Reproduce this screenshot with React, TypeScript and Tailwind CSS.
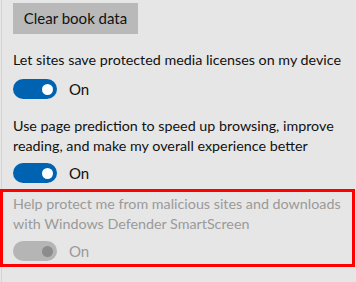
import { useState } from "react";

const font = { fontFamily: 'Lato, "Segoe UI", sans-serif' };

export default function App() {
  const [media, setMedia] = useState(true);
  const [predict, setPredict] = useState(true);

  return (
    <div className="relative h-[282px] w-[356px] overflow-hidden bg-[#e6e6e6]" style={font}>
      <div className="ml-px h-full border-l border-[#d4d4d4] pl-[11px] pt-[3px]">
        <button className="h-[31px] w-[125px] bg-[#b9b9b9] text-[15px] text-[#111]">Clear book data</button>

        <Setting
          label="Let sites save protected media licenses on my device"
          on={media}
          onToggle={() => setMedia(!media)}
          className="mt-[16px]"
          rowGap="mt-[9px]"
        />
        <Setting
          label="Use page prediction to speed up browsing, improve reading, and make my overall experience better"
          on={predict}
          onToggle={() => setPredict(!predict)}
          className="mt-[17px]"
          rowGap="mt-[7px]"
        />
        <Setting
          label="Help protect me from malicious sites and downloads with Windows Defender SmartScreen"
          on
          disabled
          className="mt-[11px]"
          rowGap="mt-[7px]"
        />
      </div>

      {/* annotation box */}
      <div className="pointer-events-none absolute left-0 top-[189px] h-[78px] w-[355px] border-[3px] border-[#ff0000]" />
    </div>
  );
}

function Setting({
  label,
  on,
  onToggle,
  disabled,
  className,
  rowGap,
}: {
  label: string;
  on: boolean;
  onToggle?: () => void;
  disabled?: boolean;
  className?: string;
  rowGap: string;
}) {
  return (
    <div className={className}>
      <p className={`text-[14.3px] leading-[20px] ${disabled ? "text-[#9a9a9a]" : "text-[#111]"}`}>{label}</p>
      <div className={`${rowGap} flex h-5 items-center gap-3`}>
        <button
          onClick={onToggle}
          disabled={disabled}
          className={`flex h-5 w-11 items-center justify-end rounded-full pr-[4px] ${
            disabled ? "bg-[#b5b5b5]" : "bg-[#0063b1]"
          }`}
        >
          <span className={`size-[11px] rounded-full ${disabled ? "bg-[#8c8c8c]" : "bg-white"}`} />
        </button>
        <span className={`text-[15px] leading-5 ${disabled ? "text-[#9a9a9a]" : "text-[#111]"}`}>{on ? "On" : "Off"}</span>
      </div>
    </div>
  );
}
